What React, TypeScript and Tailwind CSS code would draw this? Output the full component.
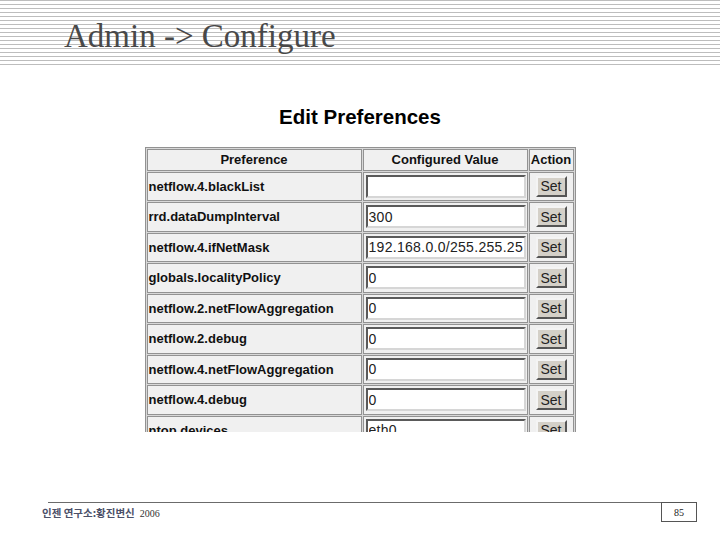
import React from 'react';

const rows: { name: string; value: string }[] = [
  { name: 'netflow.4.blackList', value: '' },
  { name: 'rrd.dataDumpInterval', value: '300' },
  { name: 'netflow.4.ifNetMask', value: '192.168.0.0/255.255.255.0' },
  { name: 'globals.localityPolicy', value: '0' },
  { name: 'netflow.2.netFlowAggregation', value: '0' },
  { name: 'netflow.2.debug', value: '0' },
  { name: 'netflow.4.netFlowAggregation', value: '0' },
  { name: 'netflow.4.debug', value: '0' },
  { name: 'ntop.devices', value: 'eth0' },
];

const cell = 'border border-[#929292] bg-[#f0f0f0] p-0';

function SetButton() {
  return (
    <button
      type="button"
      className="h-[21px] w-[31px] border-2 border-t-[#f4f4f4] border-l-[#f4f4f4] border-b-[#555] border-r-[#555] bg-[#d4d0c8] text-[14px] leading-[16px] text-[#222]"
    >
      Set
    </button>
  );
}

export default function App() {
  return (
    <div className="flex h-[540px] w-[720px] flex-col bg-white font-['Liberation_Sans',Arial,sans-serif]">
      <header className="h-[65px] shrink-0 bg-[image:repeating-linear-gradient(to_bottom,#bdbdbd_0px,#bdbdbd_1px,#ffffff_1px,#ffffff_4px)] pl-[64px] pt-[20px]">
        <h1 className="font-['Liberation_Serif','Times_New_Roman',serif] text-[33px] leading-[33px] text-[#484848]">
          Admin -&gt; Configure
        </h1>
      </header>

      <main className="flex flex-1 flex-col items-center pt-[40px]">
        <h2 className="h-[24px] text-[20.5px] font-bold leading-[24px] text-black">Edit Preferences</h2>

        <div className="mt-[18px] h-[285px] w-[431px] overflow-hidden">
          <table className="w-[431px] table-fixed border-separate border-spacing-[1px] border border-[#929292] bg-[#d8d8d8] text-[13px] text-[#111]">
            <colgroup>
              <col className="w-[215px]" />
              <col className="w-[165px]" />
              <col className="w-[45px]" />
            </colgroup>
            <thead>
              <tr className="h-[21px]">
                <th className={`${cell} font-bold`}>Preference</th>
                <th className={`${cell} font-bold`}>Configured Value</th>
                <th className={`${cell} font-bold`}>Action</th>
              </tr>
            </thead>
            <tbody>
              {rows.map((r) => (
                <tr key={r.name} className="h-[29.5px]">
                  <td className={`${cell} pl-px text-left font-bold`}>{r.name}</td>
                  <td className={`${cell} pl-[2px]`}>
                    <input
                      defaultValue={r.value}
                      className="block h-[23px] w-[160px] border-2 border-t-[#5a5a5a] border-l-[#5a5a5a] border-b-[#d6d6d6] border-r-[#d6d6d6] bg-white px-[1px] text-[14px] tracking-[0.3px] text-[#222] outline-none"
                    />
                  </td>
                  <td className={`${cell} text-center`}>
                    <SetButton />
                  </td>
                </tr>
              ))}
            </tbody>
          </table>
        </div>
      </main>

      <footer className="flex h-[38px] shrink-0 items-start pl-[42px] pr-[23px]">
        <div className="flex flex-1 flex-col">
          <div className="ml-[6px] h-px bg-[#6b6b6b]" />
          <div className="mt-[4px] flex items-baseline gap-[5px]">
            <span className="font-['Noto_Sans_CJK_KR',sans-serif] text-[10.5px] font-bold leading-[12px] text-[#4b5068]">
              인젠 연구소:황진변신
            </span>
            <span className="font-['Liberation_Serif','Times_New_Roman',serif] text-[10px] leading-[12px] text-[#333]">
              2006
            </span>
          </div>
        </div>
        <div className="flex h-[20px] w-[36px] items-center justify-center border border-[#555] font-['Liberation_Serif','Times_New_Roman',serif] text-[10px] text-[#222]">
          85
        </div>
      </footer>
    </div>
  );
}
